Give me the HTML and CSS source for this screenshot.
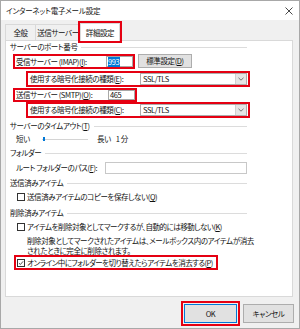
FILE: index.html
```html
<!DOCTYPE html>
<html>
<head>
  <title>インターネット電子メール設定</title>
  <link rel="stylesheet" href="styles.css">
</head>
<body>
  <div class="window">
    <div class="titlebar">
      <span class="title">インターネット電子メール設定</span>
      <svg class="close" viewBox="0 0 8 8"><path d="M0.5 0.5L7.5 7.5M7.5 0.5L0.5 7.5" stroke="#333" stroke-width="0.9" fill="none"/></svg>
    </div>
    <div class="dialog">
      <div class="tabs">
        <div class="tab tab-general">全般</div>
        <div class="tab tab-send">送信サーバー</div>
        <div class="tab active">詳細設定</div>
      </div>
      <div class="panel">
        <div class="group">
          <div class="group-title"><span>サーバーのポート番号</span></div>
          <div class="row row-port">
            <div class="mark port-box">
              <span class="label">受信サーバー (IMAP)(<u>I</u>):</span>
              <span class="input port"><span class="sel">993</span></span>
            </div>
            <div class="btn btn-default"><span>標準設定(<u>D</u>)</span></div>
          </div>
          <div class="row row-enc">
            <div class="mark enc-box">
              <span class="label">使用する暗号化接続の種類(<u>E</u>):</span>
              <div class="select"><span>SSL/TLS</span><span class="arrow"><svg viewBox="0 0 6 4"><path d="M0.5 0.8L3 3.2L5.5 0.8" stroke="#555" stroke-width="0.8" fill="none"/></svg></span></div>
            </div>
          </div>
          <div class="row row-port smtp">
            <div class="mark port-box">
              <span class="label">送信サーバー (SMTP)(<u>O</u>):</span>
              <span class="input port">465</span>
            </div>
          </div>
          <div class="row row-enc last">
            <div class="mark enc-box">
              <span class="label">使用する暗号化接続の種類(<u>C</u>):</span>
              <div class="select"><span>SSL/TLS</span><span class="arrow"><svg viewBox="0 0 6 4"><path d="M0.5 0.8L3 3.2L5.5 0.8" stroke="#555" stroke-width="0.8" fill="none"/></svg></span></div>
            </div>
          </div>

          <div class="group-title spaced"><span>サーバーのタイムアウト(<u>T</u>)</span></div>
          <div class="row row-slider">
            <span class="slider-label">短い</span>
            <div class="track"><span class="thumb"></span></div>
            <span class="slider-long">長い</span>
            <span>1 分</span>
          </div>

          <div class="group-title spaced"><span>フォルダー</span></div>
          <div class="row row-path">
            <span class="label">ルート フォルダーのパス(<u>F</u>):</span>
            <span class="input path"></span>
          </div>

          <div class="group-title spaced"><span>送信済みアイテム</span></div>
          <div class="row row-check">
            <span class="checkbox"></span>
            <span>送信済みアイテムのコピーを保存しない(<u>Q</u>)</span>
          </div>

          <div class="group-title spaced deleted"><span>削除済みアイテム</span></div>
          <div class="row row-check">
            <span class="checkbox"></span>
            <span class="tight">アイテムを削除対象としてマークするが、自動的には移動しない(<u>K</u>)</span>
          </div>
          <div class="note">
            削除対象としてマークされたアイテムは、メールボックス内のアイテムが消去<br>
            されたときに完全に削除されます。
          </div>
          <div class="mark purge-box">
            <span class="checkbox checked"><svg viewBox="0 0 8 8"><path d="M1.3 4.2L3.2 6L6.8 1.8" stroke="#222" stroke-width="1" fill="none"/></svg></span>
            <span class="tight">オンライン中にフォルダーを切り替えたらアイテムを消去する(<u>P</u>)</span>
          </div>
        </div>
      </div>
      <div class="actions">
        <div class="mark ok-box">
          <div class="btn ok">OK</div>
        </div>
        <div class="btn cancel">キャンセル</div>
      </div>
    </div>
  </div>
</body>
</html>
```

FILE: styles.css
```css
* {
  box-sizing: border-box;
}
body {
  margin: 0;
  font-family: "Noto Sans CJK JP", "Noto Sans", sans-serif;
  font-size: 7.5px;
  line-height: 10px;
  letter-spacing: -0.4px;
  color: #111;
  font-feature-settings: "palt";
  white-space: nowrap;
}
u {
  text-decoration-thickness: 1px;
}
.tight {
  letter-spacing: -0.52px;
}
.window {
  width: 300px;
  height: 329px;
  border: 1px solid #a8a8a8;
  background-color: #f0f0f0;
  display: flex;
  flex-direction: column;
}
.titlebar {
  height: 19px;
  background-color: #fff;
  display: flex;
  align-items: center;
  justify-content: space-between;
  padding: 0 6px 0 5px;
}
.title {
  letter-spacing: -0.2px;
}
.close {
  width: 8px;
  height: 8px;
}
.dialog {
  flex: 1;
  padding: 0 5px 0 4px;
}
.tabs {
  height: 20px;
  display: flex;
  align-items: flex-end;
}
.tab {
  height: 16px;
  border: 1px solid #d9d9d9;
  border-bottom: none;
  margin-right: -1px;
  display: flex;
  align-items: center;
  justify-content: center;
  flex-shrink: 0;
}
.tab-general {
  width: 31px;
}
.tab-send {
  width: 46px;
}
.tab.active {
  width: 40px;
  height: 18px;
  margin-bottom: -1px;
  background-color: #fff;
  outline: 2px solid #e50012;
  position: relative;
  z-index: 1;
}
.panel {
  width: 288px;
  height: 257px;
  background-color: #fff;
  border: 1px solid #d9d9d9;
  padding-left: 4px;
}
.group {
  width: 237px;
}
.group-title {
  height: 12px;
  display: flex;
  align-items: center;
  gap: 4px;
}
.group-title::after {
  content: "";
  flex: 1;
  height: 1px;
  background-color: #dcdcdc;
}
.group-title.spaced {
  margin-top: 2px;
}
.group-title.deleted {
  margin-top: 3px;
}
.row {
  display: flex;
  align-items: center;
}
.row > *,
.mark > * {
  flex-shrink: 0;
}
.mark {
  border: 2px solid #e50012;
  display: flex;
  align-items: center;
}
.input {
  height: 11px;
  border: 1px solid #a8a8a8;
  background-color: #fff;
  display: flex;
  align-items: center;
  padding-left: 1px;
}
.sel {
  background-color: #0078d7;
  color: #fff;
  padding-right: 1px;
}
.btn {
  background-color: #e1e1e1;
  border: 1px solid #adadad;
  display: flex;
  align-items: center;
  justify-content: center;
}

/* server ports */
.row-port {
  height: 17px;
  align-items: flex-start;
}
.port-box {
  margin: 1px 0 0 3px;
  width: 122px;
  height: 15px;
  padding-left: 1px;
}
.port-box .label {
  width: 90px;
}
.port {
  width: 27px;
}
.btn-default {
  margin: 1px 0 0 3px;
  width: 54px;
  height: 14px;
}
.row-port.smtp {
  height: 15px;
}
.smtp .port-box {
  width: 124px;
  height: 14px;
}
.smtp .port-box .label {
  width: 92px;
}
.smtp .port {
  height: 10px;
}
.row-enc {
  height: 17px;
  align-items: flex-start;
}
.row-enc.last {
  height: 16px;
}
.enc-box {
  margin: 1px 0 0 16px;
  width: 224px;
  height: 16px;
  padding-left: 2px;
}
.row-enc.last .enc-box {
  margin-top: 0;
}
.enc-box .label {
  width: 110px;
}
.select {
  width: 107px;
  height: 12px;
  border: 1px solid #adadad;
  background-color: #fff;
  display: flex;
  align-items: center;
  justify-content: space-between;
  padding-left: 2px;
}
.arrow {
  width: 11px;
  height: 10px;
  background-color: #e5e5e5;
  border-left: 1px solid #d0d0d0;
  display: flex;
  align-items: center;
  justify-content: center;
}
.arrow svg {
  width: 6px;
  height: 4px;
}

/* timeout */
.row-slider {
  height: 12px;
  margin-top: 1px;
  padding-left: 6px;
}
.slider-label {
  width: 26px;
}
.track {
  width: 46px;
  height: 1px;
  background-color: #d4d4d4;
  display: flex;
  align-items: center;
  padding-left: 1px;
}
.thumb {
  width: 2px;
  height: 4px;
  background-color: #0078d7;
}
.slider-long {
  margin: 0 5px 0 9px;
}

/* folder */
.row-path {
  height: 14px;
  margin-top: 2px;
  padding-left: 6px;
}
.row-path .label {
  width: 89px;
}
.path {
  width: 142px;
  height: 12px;
  border-color: #c8c8c8;
}

/* checkboxes */
.row-check {
  height: 14px;
  margin-top: 1px;
  padding-left: 7px;
  gap: 2px;
}
.checkbox {
  width: 8px;
  height: 8px;
  border: 1px solid #333;
  background-color: #fff;
  display: flex;
  flex-shrink: 0;
}
.checkbox svg {
  width: 100%;
  height: 100%;
}
.note {
  margin-top: 2px;
  padding-left: 17px;
}
.purge-box {
  margin: -1px 0 0 4px;
  width: 204px;
  height: 15px;
  padding-left: 1px;
  gap: 2px;
}

/* buttons */
.actions {
  display: flex;
  justify-content: flex-end;
  align-items: flex-start;
  padding-top: 4px;
  gap: 3px;
}
.ok-box {
  padding: 1px;
}
.ok {
  width: 53px;
  height: 19px;
  border-color: #0078d7;
}
.cancel {
  width: 51px;
  height: 19px;
  margin-top: 3px;
}
```
